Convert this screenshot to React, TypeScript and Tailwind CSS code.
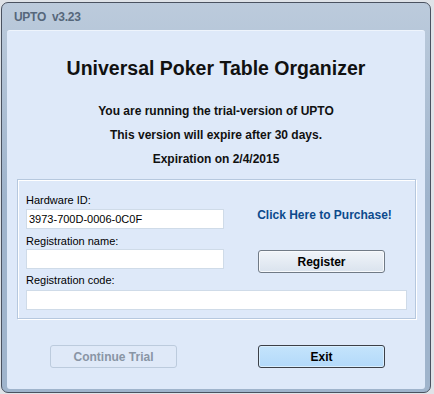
import React from "react";

/* ─── Trial / registration dialog ─── */

const LABEL = "text-[11px] leading-[14px] text-black";
const INPUT =
  "h-[20px] w-full bg-white border border-[#cfdbe8] px-[2px] text-[11px] text-black outline-none";

export default function App() {
  return (
    <div
      className="w-[434px] h-[394px] bg-[#dfe3e8] overflow-hidden"
      style={{ fontFamily: '"Liberation Sans", Arial, sans-serif' }}
    >
      {/* ── Window frame ── */}
      <div className="ml-[1px] mt-[2px] w-[430px] h-[391px] rounded-[7px] border border-[#4a5260] bg-gradient-to-b from-[#bccbdc] via-[#9fb4cc] to-[#9fb4cc] flex flex-col">
        {/* Title bar */}
        <div className="h-[27px] flex items-center pl-[12px]">
          <span className="text-[12px] font-bold text-[#56677b] whitespace-pre tracking-[-0.3px]">
            UPTO  v3.23
          </span>
        </div>

        {/* Client area */}
        <div className="mx-[5px] mb-[3px] flex-1 rounded-[3px] bg-[#dee9f9] border-t border-[#eef4fc] flex flex-col items-center pt-[26px]">
          <h1 className="text-[19.5px] leading-[22px] font-bold text-[#111]">
            Universal Poker Table Organizer
          </h1>

          <div className="mt-[25px] flex flex-col items-center gap-[10px] text-[12px] leading-[14px] font-bold text-[#111]">
            <p>You are running the trial-version of UPTO</p>
            <p>This version will expire after 30 days.</p>
            <p>Expiration on 2/4/2015</p>
          </div>

          {/* ── Registration group ── */}
          <div className="mt-[13px] self-start ml-[10px] w-[399px] h-[140px] border border-[#b6c8de] shadow-[inset_1px_1px_0_#ffffff,1px_1px_0_#ffffff] pt-[13px] px-[8px]">
            <div className="flex items-start h-[76px]">
              <div className="w-[198px] flex flex-col">
                <label className={LABEL}>Hardware ID:</label>
                <input className={`${INPUT} mt-[2px]`} defaultValue="3973-700D-0006-0C0F" readOnly />
                <label className={`${LABEL} mt-[5px]`}>Registration name:</label>
                <input className={`${INPUT} mt-[1px]`} />
              </div>

              <div className="ml-[34px] w-[127px] flex flex-col items-center">
                <a className="mt-[15px] ml-[6px] text-[12px] leading-[14px] font-bold text-[#0c4a8c] whitespace-nowrap cursor-pointer">
                  Click Here to Purchase!
                </a>
                <button className="mt-[28px] w-[127px] h-[23px] rounded-[3px] border border-[#707a86] bg-gradient-to-b from-[#f0f4f9] to-[#dae3ee] shadow-[inset_0_0_0_1px_#f7f9fc] text-[12px] font-bold text-black">
                  Register
                </button>
              </div>
            </div>

            <label className={`${LABEL} block mt-[4px]`}>Registration code:</label>
            <input className={`${INPUT} mt-[2px]`} />
          </div>

          {/* ── Bottom buttons ── */}
          <div className="mt-[26px] self-start ml-[43px] flex gap-[81px]">
            <button
              disabled
              className="w-[127px] h-[23px] rounded-[3px] border border-[#bccbdd] bg-[#dfe9f8] text-[12px] font-bold text-[#8995a5]"
            >
              Continue Trial
            </button>
            <button className="w-[127px] h-[23px] rounded-[3px] border border-[#3c4048] bg-gradient-to-b from-[#c4e4fc] to-[#b3d9fa] shadow-[inset_0_0_0_1px_#d9eefe] text-[12px] font-bold text-black">
              Exit
            </button>
          </div>
        </div>
      </div>
    </div>
  );
}
